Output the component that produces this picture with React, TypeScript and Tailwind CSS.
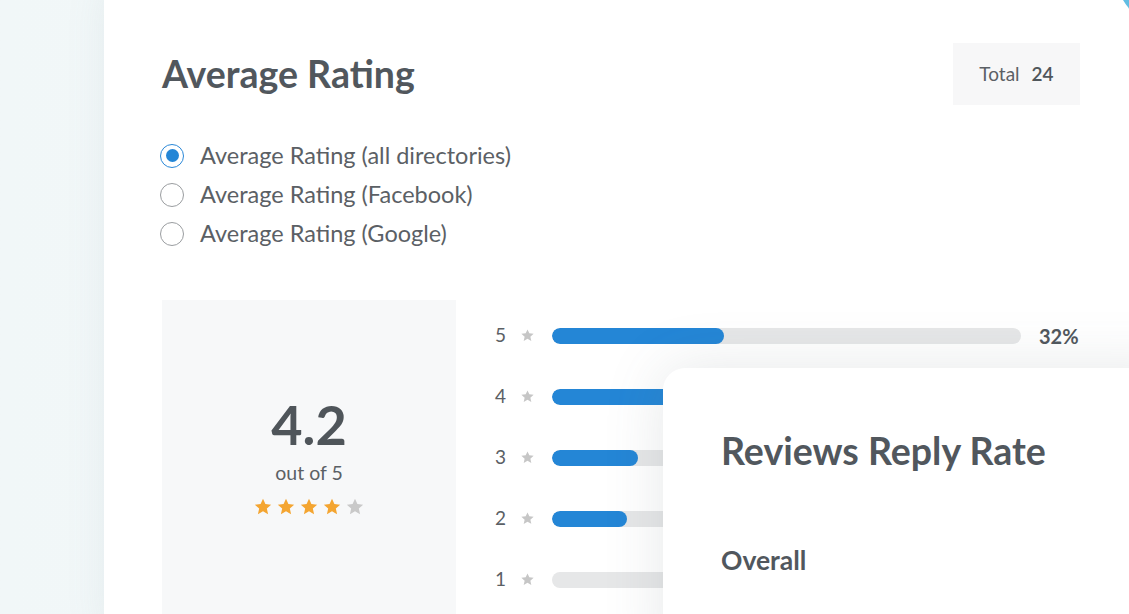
import React from "react";

const bars = [
  { label: 5, fill: 172, pct: "32%" },
  { label: 4, fill: 200, pct: "" },
  { label: 3, fill: 86, pct: "" },
  { label: 2, fill: 75, pct: "" },
  { label: 1, fill: 0, pct: "" },
];

function Star({ className }: { className: string }) {
  return (
    <svg viewBox="0 0 24 24" className={className} fill="currentColor">
      <path d="M12 2.2l2.9 6.3 6.9.7-5.2 4.6 1.5 6.8L12 17.1l-6.1 3.5 1.5-6.8-5.2-4.6 6.9-.7z" />
    </svg>
  );
}

function Radio({ checked, label }: { checked?: boolean; label: string }) {
  return (
    <label className="flex h-[39px] items-center">
      <span
        className={
          checked
            ? "ml-[-2px] flex h-[24px] w-[24px] items-center justify-center rounded-full border-[1.5px] border-[#2a88d8] bg-white"
            : "ml-[-2px] flex h-[24px] w-[24px] items-center justify-center rounded-full border-[1.5px] border-[#9a9da0] bg-white"
        }
      >
        {checked && <span className="h-[13px] w-[13px] rounded-full bg-[#2486d6]" />}
      </span>
      <span className="ml-[16px] text-[23.5px] text-[#5b6065]">{label}</span>
    </label>
  );
}

export default function App() {
  return (
    <div className="relative h-[614px] w-full overflow-hidden bg-gradient-to-r from-[#f1f7f8] to-[#f6fafa] font-['Lato','Liberation_Sans',sans-serif]">
      {/* blue blob peeking in at top right */}
      <div className="absolute left-[1115px] top-[-90px] h-[120px] w-[120px] rounded-full bg-[#62bde3]" />

      <div className="ml-[104px] mt-[-20px] w-[1100px] rounded-[22px] bg-white pl-[58px] pt-[63px] shadow-[0_0_40px_rgba(120,140,150,0.10)]">
        <div className="flex w-[918px] items-center justify-between">
          <h1 className="text-[37.5px] font-bold text-[#51575d]">Average Rating</h1>
          <div className="flex h-[62px] w-[127px] items-center justify-center gap-[12px] bg-[#f7f7f8] text-[19px] text-[#5b6065]">
            <span>Total</span>
            <span className="font-semibold text-[#50565b]">24</span>
          </div>
        </div>

        <div className="mt-[31px] flex flex-col">
          <Radio checked label="Average Rating (all directories)" />
          <Radio label="Average Rating (Facebook)" />
          <Radio label="Average Rating (Google)" />
        </div>

        <div className="mt-[47px] flex w-[918px]">
          <div className="flex h-[340px] w-[294px] flex-col items-center bg-[#f7f8f9] pt-[93px]">
            <div className="text-[54px] font-bold leading-[1.2] text-[#4f555a]">4.2</div>
            <div className="text-[19.5px] text-[#5b6065]">out of 5</div>
            <div className="mt-[10px] flex gap-[3px]">
              <Star className="h-[20px] w-[20px] text-[#f4a531]" />
              <Star className="h-[20px] w-[20px] text-[#f4a531]" />
              <Star className="h-[20px] w-[20px] text-[#f4a531]" />
              <Star className="h-[20px] w-[20px] text-[#f4a531]" />
              <Star className="h-[20px] w-[20px] text-[#c9c9c9]" />
            </div>
          </div>

          <div className="ml-[39px] flex flex-col pt-[5px]">
            {bars.map((b) => (
              <div key={b.label} className="flex h-[61px] items-center">
                <span className="w-[20px] text-[19px] text-[#5b6065]">{b.label}</span>
                <Star className="ml-[5px] h-[15px] w-[15px] text-[#c6c6c6]" />
                <div className="ml-[17px] h-[16px] w-[469px] overflow-hidden rounded-full bg-[#e6e7e8]">
                  <div className="h-full rounded-full bg-[#2486d6]" style={{ width: b.fill }} />
                </div>
                <span className="ml-[18px] text-[20px] font-bold text-[#51575d]">{b.pct}</span>
              </div>
            ))}
          </div>
        </div>
      </div>

      {/* second card lying over the first */}
      <div className="absolute left-[663px] top-[368px] h-[300px] w-[520px] rounded-tl-[22px] bg-white pl-[58px] pt-[55px] shadow-[0_0_60px_rgba(90,100,110,0.15)]">
        <h2 className="text-[37.5px] font-bold text-[#51575d]">Reviews Reply Rate</h2>
        <div className="mt-[62px] text-[26.5px] font-bold text-[#51575d]">Overall</div>
      </div>
    </div>
  );
}
